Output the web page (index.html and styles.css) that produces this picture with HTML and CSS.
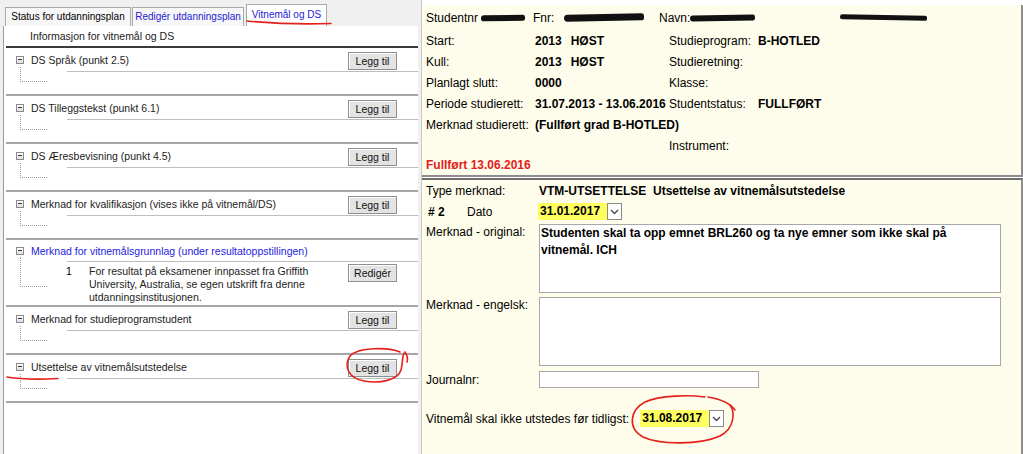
FILE: index.html
```html
<!DOCTYPE html>
<html lang="no">
<head>
    <meta charset="UTF-8">
    <title>Vitnemål og DS</title>
    <link rel="stylesheet" href="styles.css">
</head>
<body>
    <div class="page">
        <div class="left">
            <div class="tabs">
                <span class="tab">Status for utdanningsplan</span>
                <span class="tab link">Redigér utdanningsplan</span>
                <span class="tab link active">Vitnemål og DS</span>
            </div>
            <div class="panel">
                <div class="panel-head">Informasjon for vitnemål og DS</div>

                <div class="sect">
                    <div class="sect-head"><span class="toggle"></span><span class="sect-title">DS Språk (punkt 2.5)</span><button class="btn">Legg til</button></div>
                    <div class="sect-body"><span class="branch"></span><div class="sect-content"></div></div>
                </div>
                <div class="sect">
                    <div class="sect-head"><span class="toggle"></span><span class="sect-title">DS Tilleggstekst (punkt 6.1)</span><button class="btn">Legg til</button></div>
                    <div class="sect-body"><span class="branch"></span><div class="sect-content"></div></div>
                </div>
                <div class="sect">
                    <div class="sect-head"><span class="toggle"></span><span class="sect-title">DS Æresbevisning (punkt 4.5)</span><button class="btn">Legg til</button></div>
                    <div class="sect-body"><span class="branch"></span><div class="sect-content"></div></div>
                </div>
                <div class="sect">
                    <div class="sect-head"><span class="toggle"></span><span class="sect-title">Merknad for kvalifikasjon (vises ikke på vitnemål/DS)</span><button class="btn">Legg til</button></div>
                    <div class="sect-body"><span class="branch"></span><div class="sect-content"></div></div>
                </div>
                <div class="sect">
                    <div class="sect-head short"><span class="toggle"></span><span class="sect-title blue">Merknad for vitnemålsgrunnlag (under resultatoppstillingen)</span></div>
                    <div class="sect-body"><span class="branch tall"></span>
                        <div class="sect-content item">
                            <span class="item-no">1</span>
                            <span class="item-text">For resultat på eksamener innpasset fra Griffith<br>University, Australia, se egen utskrift fra denne<br>utdanningsinstitusjonen.</span>
                            <button class="btn">Redigér</button>
                        </div>
                    </div>
                </div>
                <div class="sect">
                    <div class="sect-head"><span class="toggle"></span><span class="sect-title">Merknad for studieprogramstudent</span><button class="btn">Legg til</button></div>
                    <div class="sect-body"><span class="branch"></span><div class="sect-content"></div></div>
                </div>
                <div class="sect">
                    <div class="sect-head"><span class="toggle"></span><span class="sect-title">Utsettelse av vitnemålsutstedelse</span><button class="btn">Legg til</button></div>
                    <div class="sect-body"><span class="branch"></span><div class="sect-content"></div></div>
                </div>
            </div>
        </div>

        <div class="right">
            <div class="info">
                <div class="info-top">
                    <span class="cell c1">Studentnr<span class="blot b1"></span></span>
                    <span class="cell c2">Fnr:<span class="blot b2"></span></span>
                    <span class="cell">Navn:<span class="blot b3"></span><span class="blot b4"></span></span>
                </div>
                <div class="info-grid">
                    <span>Start:</span><b>2013<span class="term">HØST</span></b><span>Studieprogram:</span><b>B-HOTLED</b>
                    <span>Kull:</span><b>2013<span class="term">HØST</span></b><span>Studieretning:</span><b></b>
                    <span>Planlagt slutt:</span><b>0000</b><span>Klasse:</span><b></b>
                    <span>Periode studierett:</span><b>31.07.2013 - 13.06.2016</b><span>Studentstatus:</span><b>FULLFØRT</b>
                    <span>Merknad studierett:</span><b class="wide">(Fullført grad B-HOTLED)</b>
                    <span></span><span></span><span>Instrument:</span><b></b>
                </div>
                <div class="done">Fullført 13.06.2016</div>
            </div>

            <div class="form">
                <div class="frow r1">
                    <span class="flabel">Type merknad:</span>
                    <b>VTM-UTSETTELSE&nbsp; Utsettelse av vitnemålsutstedelse</b>
                </div>
                <div class="frow r2">
                    <span class="flabel"><b class="num"># 2</b>Dato</span>
                    <span class="pick"><span class="pick-val">31.01.2017</span><span class="pick-arrow"><svg width="9" height="6" viewBox="0 0 9 6"><path d="M1 1 L4.5 4.5 L8 1" fill="none" stroke="#444" stroke-width="1.3"/></svg></span></span>
                </div>
                <div class="frow top r3">
                    <span class="flabel">Merknad - original:</span>
                    <textarea class="area" readonly>Studenten skal ta opp emnet BRL260 og ta nye emner som ikke skal på vitnemål. ICH</textarea>
                </div>
                <div class="frow top r4">
                    <span class="flabel">Merknad - engelsk:</span>
                    <textarea class="area" readonly></textarea>
                </div>
                <div class="frow r5">
                    <span class="flabel">Journalnr:</span>
                    <input class="field" type="text">
                </div>
                <div class="frow r6">
                    <span class="flabel-auto">Vitnemål skal ikke utstedes før tidligst:</span>
                    <span class="pick"><span class="pick-val">31.08.2017</span><span class="pick-arrow"><svg width="9" height="6" viewBox="0 0 9 6"><path d="M1 1 L4.5 4.5 L8 1" fill="none" stroke="#444" stroke-width="1.3"/></svg></span></span>
                </div>
            </div>
        </div>
    </div>

    <!-- hand drawn red marks on top of the screenshot -->
    <svg class="marks" width="1023" height="454" viewBox="0 0 1023 454">
        <g fill="none" stroke="#e3201b" stroke-width="1.6" stroke-linecap="round">
            <path d="M247 21 C268 23 300 24.5 331 23.5"/>
            <path d="M7 377 C22 379.5 40 379.5 58 378.5"/>
            <path d="M400 352 C388 347 358 347 350 356 C344 365 347 378 364 381 C380 384 398 380 401 370 C403 362 402 357 404 353"/>
            <path d="M405 352 C407 355 408 359 407 362"/>
            <path d="M705 397 C690 395 660 395 645 402 C630 410 627 428 643 437 C660 445 700 445 720 436 C735 428 735 412 730 405"/>
            <path d="M708 397 C720 399 730 403 735 410"/>
        </g>
    </svg>
</body>
</html>
```

FILE: styles.css
```css
* {
    box-sizing: border-box;
}

body {
    margin: 0;
    background: #f0f0f0;
    font-family: "Liberation Sans", Arial, sans-serif;
    font-size: 12px;
    color: #000;
}

.page {
    display: flex;
    height: 454px;
}

/* left side: tabs + tree panel */
.left {
    width: 415px;
    margin-left: 3px;
    display: flex;
    flex-direction: column;
}

.tabs {
    display: flex;
    align-items: flex-end;
    height: 26px;
    padding-left: 2px;
    gap: 1px;
}
.tab {
    height: 19px;
    line-height: 17px;
    padding: 0;
    font-size: 10px;
    text-align: center;
    background: #f7f7f7;
    border: 1px solid #a9a9a9;
    border-bottom: none;
    white-space: nowrap;
}
.tab:nth-child(1) { width: 126px; }
.tab:nth-child(2) { width: 112px; }
.tab.active {
    width: 81px;
    height: 22px;
    margin-left: 1px;
    background: #fff;
    line-height: 19px;
}
.link {
    color: #2323d6;
}

.panel {
    flex: 1;
    background: #fff;
    border-left: 1px solid #8e9db0;
    padding-left: 2px;
}

.panel-head {
    height: 22px;
    line-height: 21px;
    padding-left: 24px;
    font-size: 10.5px;
    color: #222;
    border-bottom: 2px solid #3a3a3a;
}

.sect {
    border-bottom: 2px solid #a7a7a7;
}
.sect-head {
    display: flex;
    align-items: center;
    height: 23px;
    padding-left: 10px;
}
.sect-head.short {
    height: 21px;
}
.toggle {
    position: relative;
    width: 8px;
    height: 8px;
    margin-right: 7px;
    border: 1px solid #8b8b8b;
    background: linear-gradient(#fff, #dcdcdc);
}
.toggle::after {
    content: "";
    position: absolute;
    left: 1px;
    top: 2px;
    width: 4px;
    height: 1px;
    background: #333;
}
.sect-title {
    font-size: 10.5px;
    color: #222;
}
.sect-title.blue {
    color: #2323e0;
}

.btn {
    margin-left: auto;
    margin-right: 21px;
    width: 49px;
    height: 18px;
    padding: 0;
    font-family: "Liberation Sans", Arial, sans-serif;
    font-size: 10.5px;
    color: #111;
    background: #e3e3e3;
    border: 1px solid #8f8f8f;
    box-shadow: inset 1px 1px 0 #fff;
    margin-top: 2px;
}

.sect-body {
    display: flex;
    align-items: flex-start;
}
.branch {
    flex: none;
    width: 27px;
    height: 15px;
    margin: -4px 0 0 14px;
    border-left: 1px dotted #999;
    border-bottom: 1px dotted #999;
}
.branch.tall {
    height: 30px;
}
.sect-content {
    flex: 1;
    margin-left: 20px;
    min-height: 23px;
    border-top: 1px solid #bdbdbd;
}

.item {
    display: flex;
    align-items: flex-start;
    padding: 2px 0 1px;
}
.item-no {
    width: 23px;
    margin-left: -1px;
    font-size: 10.5px;
    line-height: 13px;
    padding-top: 1px;
}
.item-text {
    font-size: 10.5px;
    line-height: 13px;
    color: #222;
    white-space: nowrap;
    padding-top: 1px;
}
.item .btn {
    margin-top: 0;
}

/* right side: student info and note form */
.right {
    width: 602px;
    margin-left: 3px;
    border-left: 1px solid #c9c9c9;
    display: flex;
    flex-direction: column;
    background: #fff;
}

.info {
    margin-top: 5px;
    height: 172px;
    padding: 2px 0 0 4px;
    background: #fefdeb;
    border-right: 2px solid #8c8c8c;
    border-bottom: 2px solid #8c8c8c;
}
.info-top {
    display: flex;
    align-items: center;
    height: 21px;
}
.cell {
    display: flex;
    align-items: center;
    white-space: nowrap;
}
.c1 { width: 107px; }
.c2 { width: 126px; }

.blot {
    display: inline-block;
    height: 6px;
    background: #111;
    border-radius: 4px 3px 3px 4px;
    transform: rotate(-1deg);
}
.b1 { width: 44px; margin-left: 3px; }
.b2 { width: 80px; margin-left: 10px; height: 7px; }
.b3 { width: 65px; margin-left: 0; }
.b4 { width: 87px; margin-left: 85px; height: 5px; transform: rotate(1deg); }

.info-grid {
    display: grid;
    grid-template-columns: 109px 134px 89px auto;
    grid-auto-rows: 21px;
    align-items: center;
    margin-top: 2px;
    white-space: nowrap;
}
.info-grid .wide {
    grid-column: span 3;
}
.term {
    margin-left: 9px;
}
.done {
    height: 18px;
    line-height: 18px;
    color: #e31b1b;
    font-weight: bold;
}

.form {
    flex: 1;
    margin-top: 1px;
    padding-left: 4px;
    background: #fefdeb;
    border-top: 2px solid #6e6e6e;
    border-right: 2px solid #8c8c8c;
}
.frow {
    display: flex;
    align-items: center;
}
.frow.top {
    align-items: flex-start;
}
.flabel {
    flex: none;
    width: 113px;
    line-height: 16px;
}
.r1 { height: 20px; margin-top: 1px; }
.r2 { height: 21px; }
.r3 { margin-top: 2px; }
.r4 { margin-top: 4px; }
.r5 { margin-top: 5px; height: 17px; }
.r6 { margin-top: 22px; height: 17px; }

.num {
    display: inline-block;
    width: 41px;
    padding-left: 2px;
}

.pick {
    display: inline-flex;
    height: 17px;
    margin-left: -1px;
}
.pick-val {
    width: 69px;
    padding-left: 2px;
    line-height: 17px;
    font-weight: bold;
    background: #ffff60;
}
.pick-arrow {
    width: 15px;
    display: flex;
    align-items: center;
    justify-content: center;
    background: #fff;
    border: 1px solid #8a8a8a;
}
.flabel-auto {
    margin-right: 12px;
}

.area {
    width: 462px;
    height: 69px;
    margin: 0;
    padding: 0 1px;
    border: 1px solid #a8a8a8;
    background: #fff;
    resize: none;
    overflow: hidden;
    font-family: "Liberation Sans", Arial, sans-serif;
    font-size: 12px;
    font-weight: bold;
    line-height: 17px;
    color: #000;
}
.field {
    width: 220px;
    height: 17px;
    margin: 0;
    border: 1px solid #a8a8a8;
    background: #fff;
}

.marks {
    position: absolute;
    left: 0;
    top: 0;
    pointer-events: none;
}
```
